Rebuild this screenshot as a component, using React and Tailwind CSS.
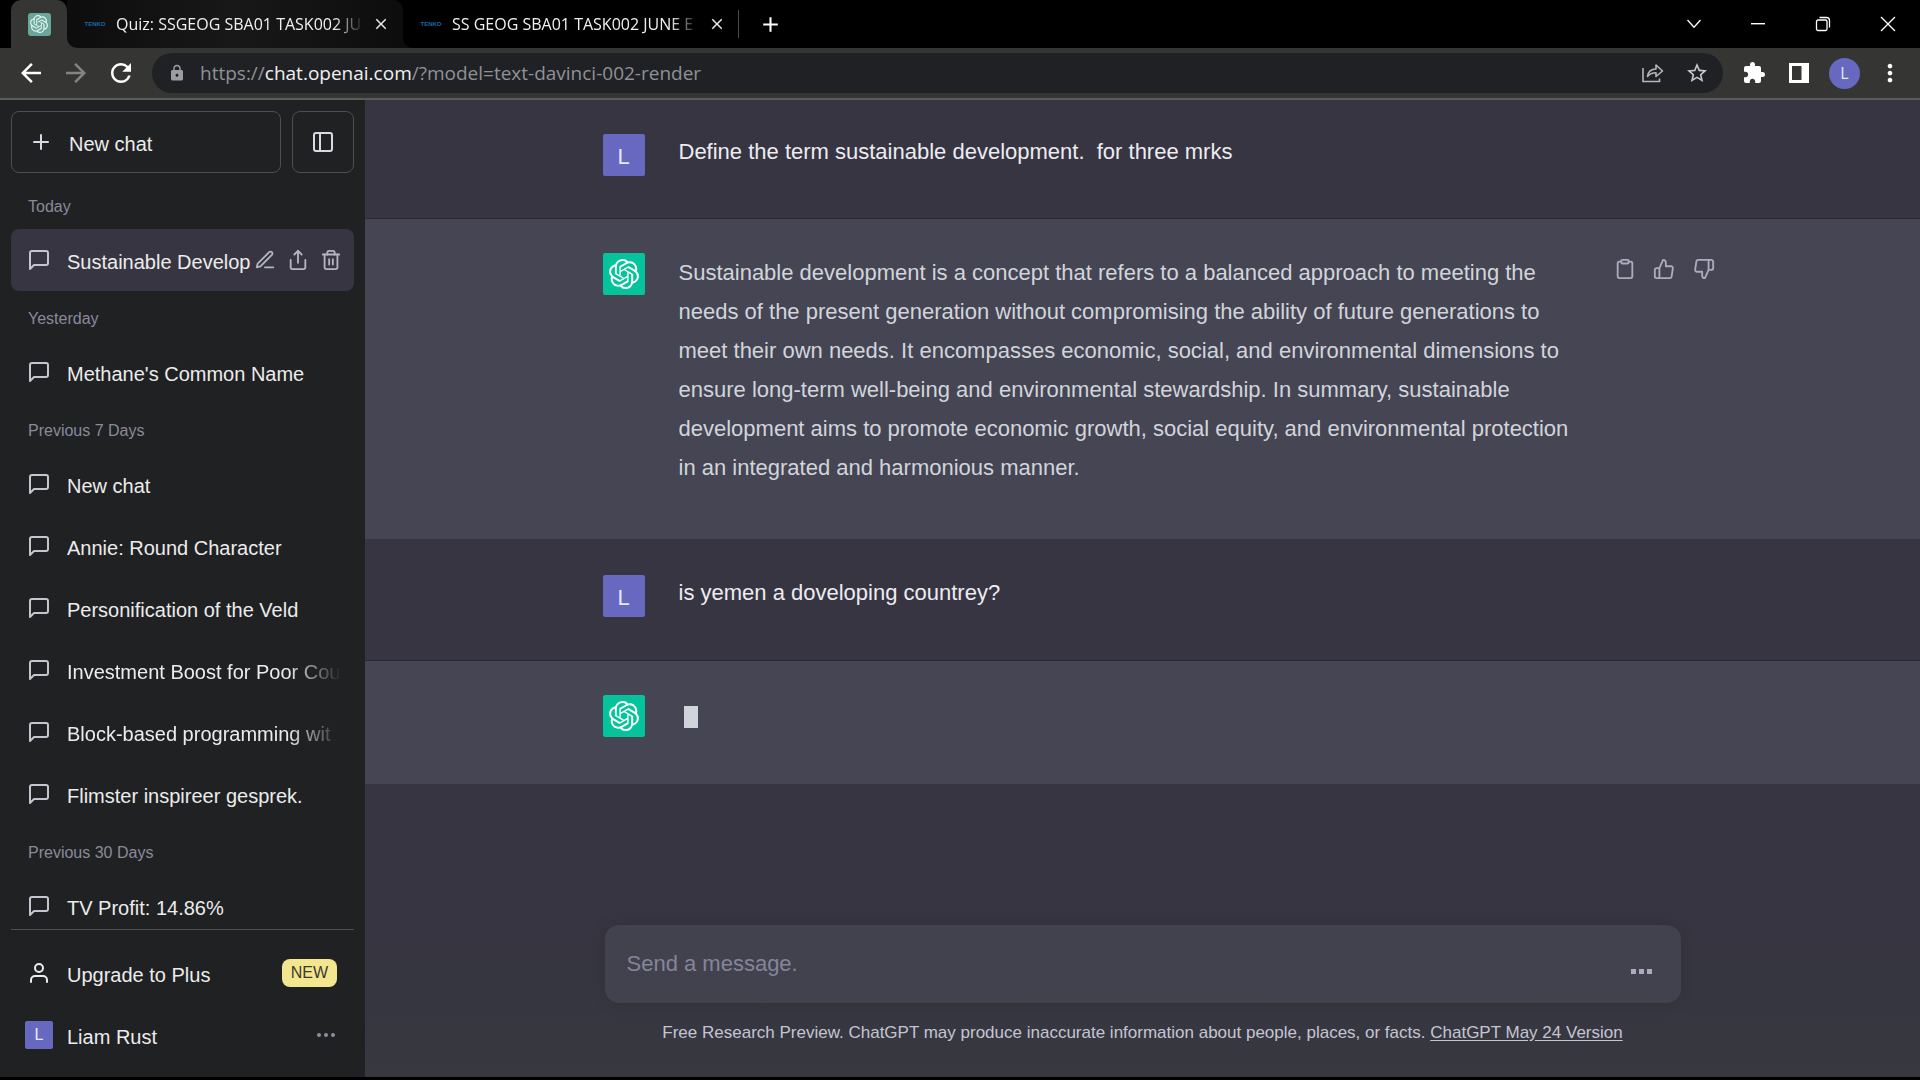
import React from "react";
import {
  FiMessageSquare,
  FiPlus,
  FiSidebar,
  FiEdit3,
  FiShare,
  FiTrash2,
  FiUser,
  FiMoreHorizontal,
  FiClipboard,
  FiThumbsUp,
  FiThumbsDown,
} from "react-icons/fi";
import {
  MdArrowBack,
  MdArrowForward,
  MdRefresh,
  MdLock,
  MdStarBorder,
  MdExtension,
  MdMoreVert,
  MdClose,
  MdAdd,
} from "react-icons/md";
import { SiOpenai } from "react-icons/si";

const groups = [
  { label: "Today", chats: [{ title: "Sustainable Develop", active: true }] },
  { label: "Yesterday", chats: [{ title: "Methane's Common Name" }] },
  {
    label: "Previous 7 Days",
    chats: [
      { title: "New chat" },
      { title: "Annie: Round Character" },
      { title: "Personification of the Veld" },
      { title: "Investment Boost for Poor Cou", fade: true },
      { title: "Block-based programming wit", fade: true },
      { title: "Flimster inspireer gesprek." },
    ],
  },
  { label: "Previous 30 Days", chats: [{ title: "TV Profit: 14.86%" }] },
];

function Tab({ title, className }) {
  return (
    <div className={"flex h-full items-center " + className}>
      <span className="w-6 shrink-0 text-center font-['Liberation_Sans',sans-serif] text-[6px] font-bold leading-none text-[#1769a8]">
        TENKO
      </span>
      <button className="ml-[9px] h-7 w-[248px] whitespace-nowrap text-left text-[16px] leading-7 text-[#f0f0f0] [mask-image:linear-gradient(to_right,black_88%,transparent)]">
        {title}
      </button>
      <button aria-label={"Close " + title} className="ml-2 shrink-0 text-[#e8e8e8]">
        <MdClose size={18} />
      </button>
    </div>
  );
}

function Browser() {
  return (
    <header className="shrink-0 font-['Open_Sans','Noto_Sans',sans-serif]">
      <div className="flex h-12 items-center bg-black pl-[11px]">
        <div className="flex h-full w-14 shrink-0 items-center justify-center rounded-t-[10px] bg-[#353634]">
          <span className="flex size-[23px] items-center justify-center rounded-[3px] bg-[#6aa79b] text-[#e4f3ef]">
            <SiOpenai size={18} />
          </span>
        </div>
        <div className="h-full w-[336px] shrink-0 bg-linear-to-r from-[#353634] from-50% to-black to-50%">
          <Tab
            title="Quiz: SSGEOG SBA01 TASK002 JU"
            className="rounded-tr-[10px] rounded-bl-[10px] bg-linear-to-r from-[#0d0d0d] via-[#181818] to-[#0d0d0d] pl-4"
          />
        </div>
        <div className="h-full w-[336px] shrink-0 bg-[#0d0d0d]">
          <Tab title="SS GEOG SBA01 TASK002 JUNE E" className="rounded-bl-[10px] bg-black pl-4" />
        </div>
        <span className="-ml-px h-7 w-px bg-[#4a4a4a]" />
        <button aria-label="New tab" className="ml-[19px] text-white">
          <MdAdd size={25} />
        </button>
        <div className="ml-auto flex text-white">
          <button aria-label="Search tabs" className="flex h-10 w-16 items-center justify-center">
            <svg width="16" height="10" viewBox="0 0 16 10" fill="none" stroke="currentColor" strokeWidth="1.3">
              <path d="M1.5 1 8 8.3 14.500 1" />
            </svg>
          </button>
          <button aria-label="Minimize" className="flex h-10 w-16 items-center justify-center">
            <svg width="14" height="2" viewBox="0 0 14 2" fill="currentColor">
              <path d="M0 0h14v1.400H0z" />
            </svg>
          </button>
          <button aria-label="Restore" className="flex h-10 w-[65px] items-center justify-center">
            <svg width="16" height="16" viewBox="0 0 16 16" fill="none" stroke="currentColor" strokeWidth="1.3">
              <rect x="1.500" y="4" width="10.500" height="10.500" rx="1.500" />
              <path d="M4.500 1.500h7a3 3 0 0 1 3 3v7" />
            </svg>
          </button>
          <button aria-label="Close window" className="flex h-10 w-[65px] items-center justify-center">
            <svg width="16" height="16" viewBox="0 0 16 16" fill="none" stroke="currentColor" strokeWidth="1.400">
              <path d="M1 1l14 14M15 1 1 15" />
            </svg>
          </button>
        </div>
      </div>
      <div className="flex h-[52px] items-center border-b-2 border-[#5a5b5a] bg-[#353634] pl-4 text-white">
        <button aria-label="Back">
          <MdArrowBack size={30} />
        </button>
        <button aria-label="Forward" className="ml-[15px] text-[#848583]">
          <MdArrowForward size={30} />
        </button>
        <button aria-label="Reload" className="ml-[15px]">
          <MdRefresh size={30} />
        </button>
        <div className="ml-4 flex h-10 flex-1 items-center rounded-full bg-[#202124] pl-4 pr-[14px]">
          <MdLock size={18} className="text-[#9a9da2]" />
          <a href="#url" className="ml-[14px] text-[19px] leading-7 text-[#8f9297]">
            https://<span className="text-[#f1f1f1]">chat.openai.com</span>/?model=text-davinci-002-render
          </a>
          <button aria-label="Share page" className="ml-auto text-[#b4b6ba]">
            <svg width="22" height="20" viewBox="0 0 22 20" fill="none" stroke="currentColor" strokeWidth="1.600">
              <path d="M1 5v13.500h16.500v-3" />
              <path d="M5.500 13.500c.6-5 3.500-7.500 8.500-7.500V2l6.500 6-6.500 5.500V9.800c-3.600 0-6.300 1-8.500 3.700z" strokeLinejoin="round" />
            </svg>
          </button>
          <button aria-label="Bookmark" className="ml-[21px] text-[#c9cacd]">
            <MdStarBorder size={24} />
          </button>
        </div>
        <button aria-label="Extensions" className="ml-[19px]">
          <MdExtension size={24} />
        </button>
        <button aria-label="Side panel" className="ml-[23px]">
          <svg width="20" height="20" viewBox="0 0 20 20">
            <path fill="currentColor" fillRule="evenodd" d="M0 0h20v20H0zM3 3v14h9.500V3z" />
          </svg>
        </button>
        <button className="ml-5 flex size-[31px] items-center justify-center rounded-full bg-[#6769c0] text-[16px] text-[#e8e8ff]">
          L
        </button>
        <button aria-label="Menu" className="ml-4 mr-4">
          <MdMoreVert size={28} />
        </button>
      </div>
    </header>
  );
}

function ChatRow({ title, active, fade }) {
  return (
    <li className={"flex h-[62px] items-center rounded-lg pl-4 pr-3 " + (active ? "bg-[#363541]" : "")}>
      <FiMessageSquare size={24} className="shrink-0 text-[#c5c5ce]" />
      <a
        href="#chat"
        className={
          "ml-4 min-w-0 flex-1 whitespace-nowrap pt-1 text-[20px] leading-7 text-[#ececec] " +
          (fade ? "[mask-image:linear-gradient(to_right,black_80%,transparent)]" : "")
        }
      >
        {title}
      </a>
      {active && (
        <div className="flex gap-[11px] text-[#b4b4c4]">
          <button aria-label="Rename">
            <FiEdit3 size={22} />
          </button>
          <button aria-label="Share">
            <FiShare size={22} />
          </button>
          <button aria-label="Delete">
            <FiTrash2 size={22} />
          </button>
        </div>
      )}
    </li>
  );
}

function Sidebar() {
  return (
    <aside className="flex w-[365px] shrink-0 flex-col bg-[#202123] px-[11px] pb-[11px] pt-[11px] text-[#ececec]">
      <div className="flex shrink-0 gap-[11px]">
        <button className="flex h-[62px] flex-1 items-center rounded-lg border border-[#4d4d53] pl-[17px] text-[20px]">
          <FiPlus size={24} className="text-[#d9d9e3]" />
          <span className="ml-4 pt-1">New chat</span>
        </button>
        <button
          aria-label="Hide sidebar"
          className="flex size-[62px] items-center justify-center rounded-lg border border-[#4d4d53] text-[#d9d9e3]"
        >
          <FiSidebar size={24} />
        </button>
      </div>
      <nav className="mt-[6px] min-h-0 flex-1 overflow-hidden border-b border-[#4d4d53]">
        {groups.map((g) => (
          <section key={g.label}>
            <h3 className="flex h-[50px] items-end pb-[10px] pl-[17px] text-[16px] leading-6 text-[#8a8a9b]">
              {g.label}
            </h3>
            <ul>
              {g.chats.map((c) => (
                <ChatRow key={c.title} {...c} />
              ))}
            </ul>
          </section>
        ))}
      </nav>
      <div className="shrink-0 pt-3">
        <button className="flex h-[62px] w-full items-center pl-4 pr-[17px] text-[20px]">
          <FiUser size={24} />
          <span className="ml-4 pt-1">Upgrade to Plus</span>
          <span className="ml-auto flex h-7 items-center rounded-lg bg-[#f4e68e] px-[9px] text-[16px] text-[#3a3a33]">NEW</span>
        </button>
        <button className="flex h-[62px] w-full items-center pl-[14px] pr-4 text-[20px]">
          <span className="flex size-7 items-center justify-center rounded-xs bg-[#6769c0] text-[16px] text-[#e8e8ff]">L</span>
          <span className="ml-[14px] pt-1">Liam Rust</span>
          <FiMoreHorizontal size={24} className="ml-auto text-[#8e8ea0]" />
        </button>
      </div>
    </aside>
  );
}

function Message({ bot, actions, className, children }) {
  return (
    <article
      className={
        "border-b px-6 text-[22px] leading-[39px] " +
        (bot ? "border-[#363541] bg-[#454553] text-[#d1d5db] " : "border-[#2b2a34] bg-[#363541] text-[#ececf1] ") +
        className
      }
    >
      <div className="mx-auto flex max-w-[1080px] items-start">
        {bot ? (
          <span className="flex size-[42px] shrink-0 items-center justify-center rounded-xs bg-[#05c39b] text-white">
            <SiOpenai size={30} />
          </span>
        ) : (
          <span className="mt-[2px] flex size-[42px] shrink-0 items-center justify-center rounded-xs bg-[#6769c0] pt-0.5 text-[#e8e8ff]">
            L
          </span>
        )}
        <div className="ml-[34px] flex-1">{children}</div>
        {actions && (
          <div className="-mr-8 ml-2 mt-[5px] flex w-[101px] shrink-0 justify-between text-[#acacbe]">
            <button aria-label="Copy">
              <FiClipboard size={22} />
            </button>
            <button aria-label="Good response">
              <FiThumbsUp size={22} />
            </button>
            <button aria-label="Bad response">
              <FiThumbsDown size={22} />
            </button>
          </div>
        )}
      </div>
    </article>
  );
}

export default function App() {
  return (
    <div className="flex h-screen flex-col overflow-hidden bg-black pb-[3px] font-['Liberation_Sans',Arial,sans-serif]">
      <Browser />
      <div className="flex min-h-0 flex-1">
        <Sidebar />
        <main className="flex min-w-0 flex-1 flex-col bg-[#363541]">
          <div className="min-h-0 flex-1 overflow-hidden">
            <Message className="pb-[42px] pt-8">Define the term sustainable development.&nbsp; for three mrks</Message>
            <Message bot actions className="pb-[52px] pt-[34px]">
              Sustainable development is a concept that refers to a balanced approach to meeting the
              <br />
              needs of the present generation without compromising the ability of future generations to
              <br />
              meet their own needs. It encompasses economic, social, and environmental dimensions to
              <br />
              ensure long-term well-being and environmental stewardship. In summary, sustainable
              <br />
              development aims to promote economic growth, social equity, and environmental protection
              <br />
              in an integrated and harmonious manner.
            </Message>
            <Message className="pb-[43px] pt-[33px]">is yemen a doveloping countrey?</Message>
            <Message bot className="pb-[47px] pt-[34px]">
              <span className="ml-[5px] mt-[11px] block h-[22px] w-[14px] bg-[#d1d5db]" />
            </Message>
          </div>
          <div className="shrink-0 bg-linear-to-b from-[#363541] to-[#373840] px-6 pb-8">
            <form className="mx-auto flex h-[78px] max-w-[1076px] items-center rounded-[14px] bg-[#42414e] pl-[22px] pr-[29px] shadow-[0_0_16px_rgba(0,0,0,0.12)]">
              <input
                aria-label="Message"
                placeholder="Send a message."
                className="min-w-0 flex-1 bg-transparent text-[22px] leading-8 text-white outline-none placeholder:text-[#85859a]"
              />
              <button type="button" aria-label="Generating" className="flex gap-[3px] pt-[14px]">
                <span className="size-[5px] bg-[#acacbe]" />
                <span className="size-[5px] bg-[#acacbe]" />
                <span className="size-[5px] bg-[#acacbe]" />
              </button>
            </form>
            <p className="mt-[18px] text-center text-[17px] leading-6 text-[#c5c5d2]">
              Free Research Preview. ChatGPT may produce inaccurate information about people, places, or facts.{" "}
              <a href="#notes" className="underline underline-offset-2">
                ChatGPT May 24 Version
              </a>
            </p>
          </div>
        </main>
      </div>
    </div>
  );
}
